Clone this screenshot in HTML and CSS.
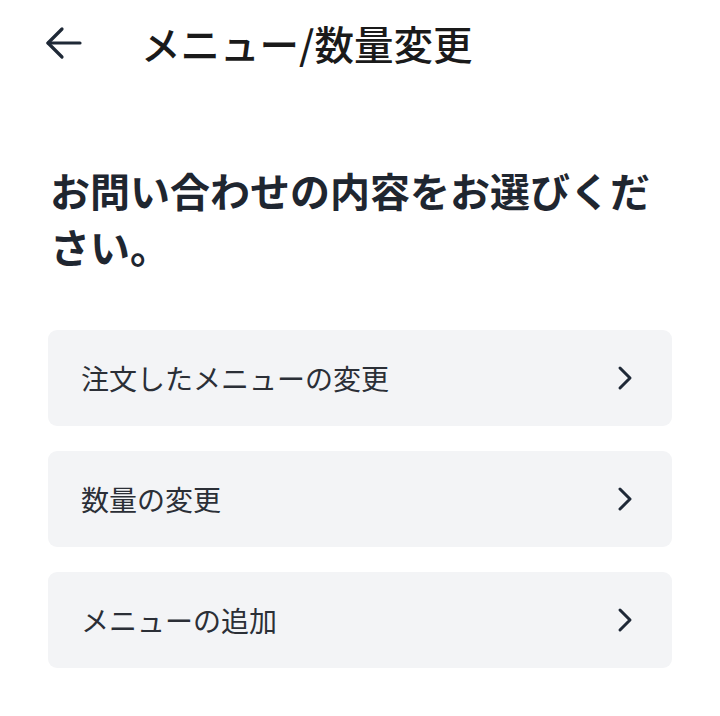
FILE: index.html
```
<!DOCTYPE html>
<html lang="ja">
<head>
<meta charset="utf-8">
<link rel="stylesheet" href="styles.css">
</head>
<body>
<div class="page">
  <header class="header">
    <button class="back" aria-label="戻る">
      <svg width="48" height="48" viewBox="0 0 24 24" fill="none" stroke="#1f2937" stroke-width="1.6" stroke-linecap="round" stroke-linejoin="round"><path d="M20 12H4"/><path d="M11 5l-7 7 7 7"/></svg>
    </button>
    <h1 class="title">メニュー/数量変更</h1>
  </header>
  <h2 class="heading">お問い合わせの内容をお選びください。</h2>
  <ul class="list">
    <li class="item"><span class="label">注文したメニューの変更</span><svg class="chev" width="30" height="30" viewBox="0 0 24 24" fill="none" stroke="#1f2937" stroke-width="2.4" stroke-linecap="round" stroke-linejoin="round"><path d="M8 4l8 8-8 8"/></svg></li>
    <li class="item"><span class="label">数量の変更</span><svg class="chev" width="30" height="30" viewBox="0 0 24 24" fill="none" stroke="#1f2937" stroke-width="2.4" stroke-linecap="round" stroke-linejoin="round"><path d="M8 4l8 8-8 8"/></svg></li>
    <li class="item"><span class="label">メニューの追加</span><svg class="chev" width="30" height="30" viewBox="0 0 24 24" fill="none" stroke="#1f2937" stroke-width="2.4" stroke-linecap="round" stroke-linejoin="round"><path d="M8 4l8 8-8 8"/></svg></li>
  </ul>
</div>
</body>
</html>
```
FILE: styles.css
```
* { box-sizing: border-box; }
html, body { margin: 0; padding: 0; background: #fff; }
body {
  font-family: "Noto Sans CJK JP", "Noto Sans", sans-serif;
  color: #1f2328;
}
.page { padding: 0 48px; }
.header {
  display: flex;
  align-items: center;
  height: 86px;
}
.back {
  display: flex;
  align-items: center;
  justify-content: center;
  width: 48px;
  height: 48px;
  padding: 0;
  margin: 0 0 0 -8px;
  border: 0;
  background: none;
}
.title {
  margin: 0 0 0 53px;
  font-size: 39.5px;
  font-weight: 500;
  line-height: 1;
  color: #1a1a1a;
}
.heading {
  margin: 76px 0 0 2px;
  font-size: 40px;
  font-weight: 700;
  line-height: 56px;
  color: #1f2630;
}
.list {
  list-style: none;
  margin: 56px 0 0;
  padding: 0;
  display: flex;
  flex-direction: column;
  gap: 25px;
}
.item {
  display: flex;
  align-items: center;
  justify-content: space-between;
  height: 96px;
  padding: 0 32px 0 33px;
  background: #f3f4f6;
  border-radius: 9px;
}
.label {
  font-size: 28px;
  color: #2b2f36;
  line-height: 1;
}
.chev { flex: none; }
```
